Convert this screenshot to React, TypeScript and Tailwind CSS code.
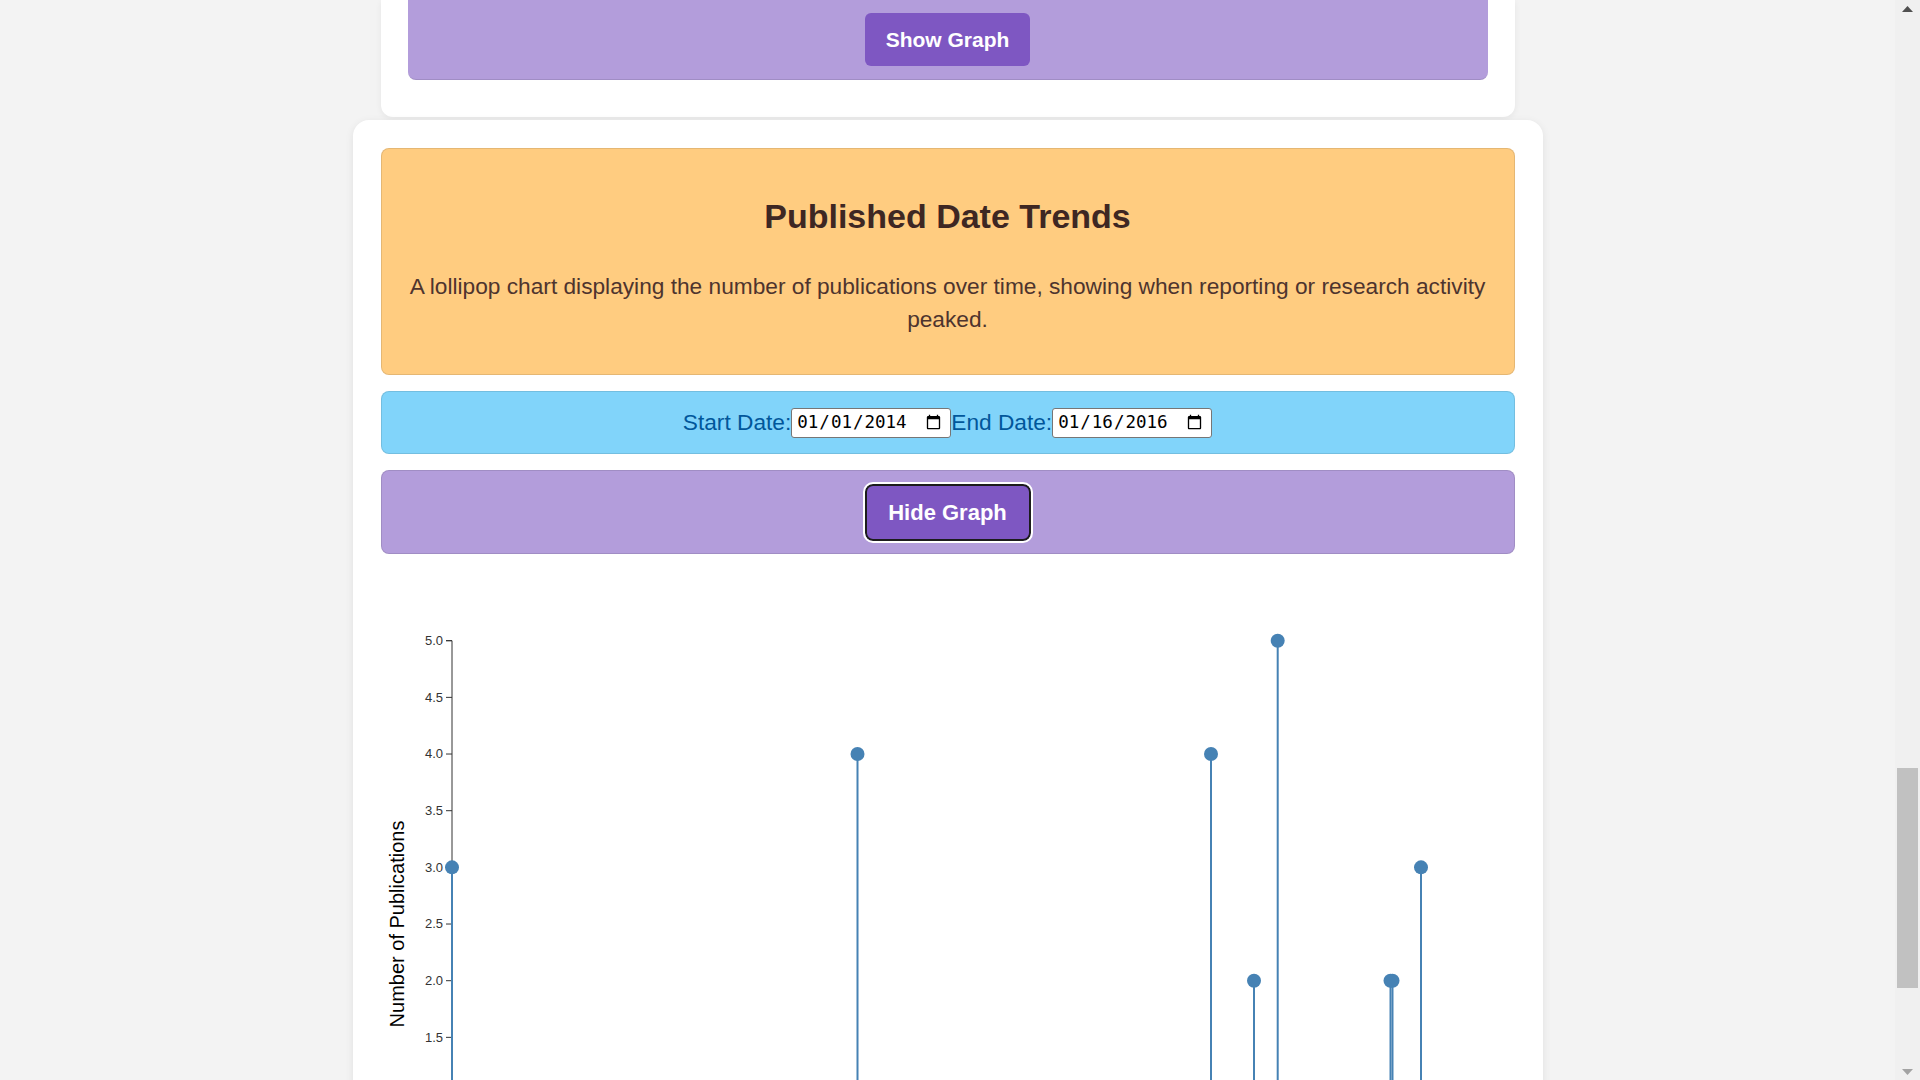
import React from 'react';

interface Pop {
  x: number;
  value: number;
}

// x positions are in chart pixels, values are publication counts
const pops: Pop[] = [
  { x: 71, value: 3 },
  { x: 476.5, value: 4 },
  { x: 830, value: 4 },
  { x: 873, value: 2 },
  { x: 896.7, value: 5 },
  { x: 1009.5, value: 2 },
  { x: 1011.5, value: 2 },
  { x: 1040, value: 3 },
];

const TOP = 70.7;
const UNIT = 113.33;
const yScale = (v: number) => TOP + (5 - v) * UNIT;
const ticks = [0, 0.5, 1, 1.5, 2, 2.5, 3, 3.5, 4, 4.5, 5];

function LollipopChart() {
  const axisX = 71;
  return (
    <svg width={1133} height={640} className="block">
      <g>
        <path
          d={`M${axisX - 6},${yScale(0)}H${axisX}V${yScale(5)}H${axisX - 6}`}
          fill="none"
          stroke="#333"
          strokeWidth={1}
        />
        {ticks.map((t) => (
          <g key={t} transform={`translate(0,${yScale(t)})`}>
            <line x1={axisX - 6} x2={axisX} stroke="#333" />
            <text
              x={axisX - 9}
              dy="0.32em"
              textAnchor="end"
              fontSize={13}
              fill="#333"
              fontFamily="'Liberation Sans', Arial, sans-serif"
            >
              {t.toFixed(1)}
            </text>
          </g>
        ))}
        <text
          transform="rotate(-90)"
          x={-354}
          y={22.5}
          textAnchor="middle"
          fontSize={20}
          fill="#000"
          fontFamily="'Liberation Sans', Arial, sans-serif"
        >
          Number of Publications
        </text>
      </g>
      {pops.map((p, i) => (
        <line
          key={`s${i}`}
          x1={p.x}
          x2={p.x}
          y1={yScale(0)}
          y2={yScale(p.value)}
          stroke="steelblue"
          strokeWidth={2}
        />
      ))}
      {pops.map((p, i) => (
        <circle key={`c${i}`} cx={p.x} cy={yScale(p.value)} r={7} fill="steelblue" />
      ))}
    </svg>
  );
}

function Scrollbar() {
  return (
    <div className="w-[25px] h-full bg-[#f0f0f0] flex flex-col">
      <div className="h-[17px] flex items-center justify-center">
        <svg width="11" height="6" viewBox="0 0 11 6">
          <polygon points="0,6 5.5,0 11,6" fill="#505050" />
        </svg>
      </div>
      <div className="flex-1 flex flex-col px-[2px]">
        <div className="mt-[751px] h-[220px] bg-[#c1c1c1]" />
      </div>
      <div className="h-[17px] flex items-center justify-center">
        <svg width="11" height="6" viewBox="0 0 11 6">
          <polygon points="0,0 5.5,6 11,0" fill="#a3a3a3" />
        </svg>
      </div>
    </div>
  );
}

export default function App() {
  return (
    <div className="flex h-screen overflow-hidden bg-[#f3f3f3] font-['Liberation_Sans',Arial,sans-serif]">
      <main className="w-[1895px] h-full overflow-hidden flex flex-col items-center">
        {/* previous chart card, mostly scrolled out of view */}
        <section className="w-[1134px] shrink-0 bg-white rounded-b-[12px] px-[27px] pb-[37px] shadow-[0_2px_6px_rgba(0,0,0,0.06)]">
          <div className="h-[80px] bg-[#b39ddb] rounded-b-[8px] border-b border-black/10 flex items-center justify-center">
            <button className="h-[53px] px-[21px] rounded-[6px] bg-[#7e57c2] text-white text-[21px] font-bold">
              Show Graph
            </button>
          </div>
        </section>

        <section className="mt-[3px] w-[1190px] shrink-0 bg-white rounded-[16px] px-[28px] pt-[28px] shadow-[0_2px_8px_rgba(0,0,0,0.08)]">
          <div className="h-[227px] bg-[#ffcc80] rounded-[8px] border border-black/10 px-5 pt-[48px] text-center">
            <h2 className="text-[34px] leading-[39px] font-bold text-[#3e2723]">Published Date Trends</h2>
            <p className="mt-[34px] text-[22.7px] leading-[33px] text-[#4e342e]">
              A lollipop chart displaying the number of publications over time, showing when reporting or research activity peaked.
            </p>
          </div>

          <div className="mt-4 h-[63px] bg-[#81d4fa] rounded-[8px] border border-black/10 flex items-center justify-center text-[22.7px] text-[#01579b]">
            <label htmlFor="start">Start Date:</label>
            <input
              id="start"
              type="date"
              defaultValue="2014-01-01"
              className="w-[160px] h-[30px] bg-white border border-[#767676] rounded-[3px] pl-[4px] pr-[6px] text-[17.5px] text-black font-['DejaVu_Sans_Mono',monospace]"
            />
            <label htmlFor="end">End Date:</label>
            <input
              id="end"
              type="date"
              defaultValue="2016-01-16"
              className="w-[160px] h-[30px] bg-white border border-[#767676] rounded-[3px] pl-[4px] pr-[6px] text-[17.5px] text-black font-['DejaVu_Sans_Mono',monospace]"
            />
          </div>

          <div className="mt-4 h-[84px] bg-[#b39ddb] rounded-[8px] border border-black/10 flex items-center justify-center">
            <button className="w-[166px] h-[57px] rounded-[8px] border-2 border-[#1c1c1c] outline-2 outline-white bg-[#7e57c2] text-white text-[22px] font-bold">
              Hide Graph
            </button>
          </div>

          <div className="mt-4">
            <LollipopChart />
          </div>
        </section>
      </main>
      <Scrollbar />
    </div>
  );
}
